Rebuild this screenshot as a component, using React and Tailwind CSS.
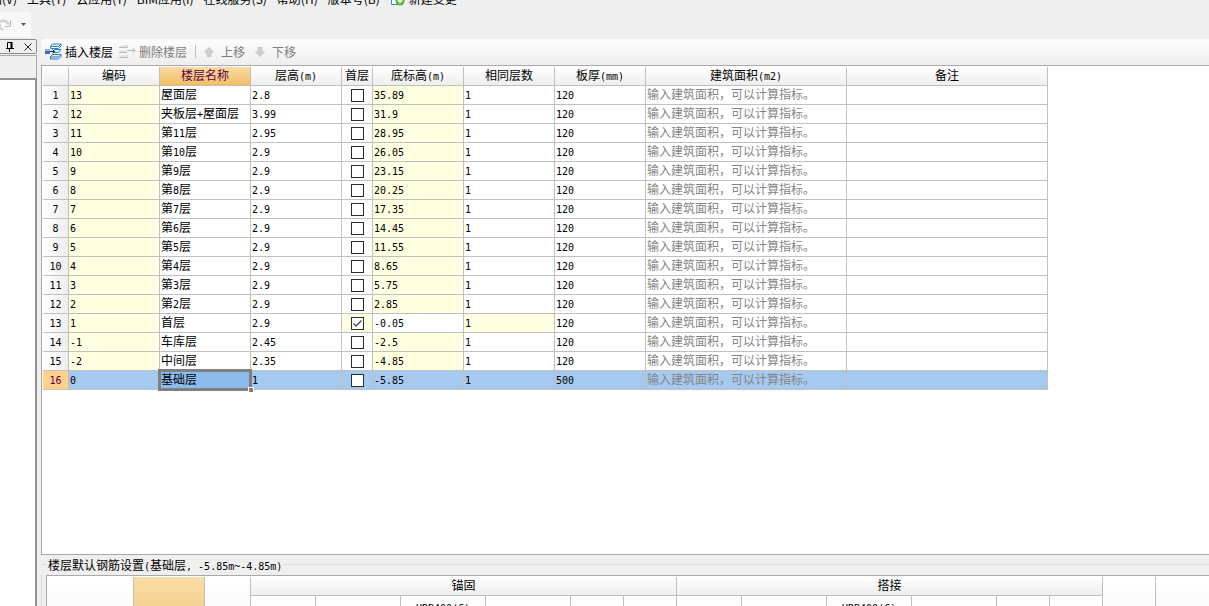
import clsx from "clsx";

const MENUS = ["视图(V)", "工具(T)", "云应用(Y)", "BIM应用(I)", "在线服务(S)", "帮助(H)", "版本号(B)"];

const COLUMNS = [
  { key: "code", label: "编码", width: "w-[91px]" },
  { key: "name", label: "楼层名称", width: "w-[91px]" },
  { key: "height", label: "层高(m)", width: "w-[91px]" },
  { key: "first", label: "首层", width: "w-[31px]" },
  { key: "bottom", label: "底标高(m)", width: "w-[91px]" },
  { key: "same", label: "相同层数", width: "w-[91px]" },
  { key: "slab", label: "板厚(mm)", width: "w-[91px]" },
  { key: "area", label: "建筑面积(m2)", width: "w-[201px]" },
  { key: "remark", label: "备注", width: "w-[201px]" },
];

const FLOORS = [
  { code: "13", name: "屋面层", height: "2.8", bottom: "35.89", slab: "120" },
  { code: "12", name: "夹板层+屋面层", height: "3.99", bottom: "31.9", slab: "120" },
  { code: "11", name: "第11层", height: "2.95", bottom: "28.95", slab: "120" },
  { code: "10", name: "第10层", height: "2.9", bottom: "26.05", slab: "120" },
  { code: "9", name: "第9层", height: "2.9", bottom: "23.15", slab: "120" },
  { code: "8", name: "第8层", height: "2.9", bottom: "20.25", slab: "120" },
  { code: "7", name: "第7层", height: "2.9", bottom: "17.35", slab: "120" },
  { code: "6", name: "第6层", height: "2.9", bottom: "14.45", slab: "120" },
  { code: "5", name: "第5层", height: "2.9", bottom: "11.55", slab: "120" },
  { code: "4", name: "第4层", height: "2.9", bottom: "8.65", slab: "120" },
  { code: "3", name: "第3层", height: "2.9", bottom: "5.75", slab: "120" },
  { code: "2", name: "第2层", height: "2.9", bottom: "2.85", slab: "120" },
  { code: "1", name: "首层", height: "2.9", bottom: "-0.05", slab: "120", first: true },
  { code: "-1", name: "车库层", height: "2.45", bottom: "-2.5", slab: "120" },
  { code: "-2", name: "中间层", height: "2.35", bottom: "-4.85", slab: "120" },
  { code: "0", name: "基础层", height: "1", bottom: "-5.85", slab: "500", selected: true },
];

const REBAR_GROUPS = ["锚固", "搭接"];
const REBAR_COLUMNS = [
  { width: "w-[65px]" },
  { width: "w-[85px]" },
  { width: "w-[85px]", label: "HRB400(C)" },
  { width: "w-[85px]" },
  { width: "w-[53px]" },
  { width: "w-[53px]" },
];

// Latin runs use a half-width mono face, Chinese keeps the 12px face
function Mixed({ text }) {
  return text
    .split(/([\x20-\x7e]+)/)
    .filter(Boolean)
    .map((part, i) =>
      /^[\x20-\x7e]/.test(part) ? (
        <span key={i} className="whitespace-pre font-['DejaVu_Sans_Mono',monospace] text-[10px] leading-none">
          {part}
        </span>
      ) : (
        <span key={i}>{part}</span>
      )
    );
}

function InsertIcon() {
  return (
    <svg width="17" height="17" viewBox="0 0 17 17" fill="none" aria-hidden="true">
      <path d="M7.500 1h8.500l-2.500 2.500H5.500z" fill="#d9eefb" stroke="#2d7fc1" />
      <path d="M5.500 3.500v2h8L16 3V1" stroke="#2d7fc1" />
      <path d="M9 6.500h7l-2.500 3H8M13.500 9.500" fill="#d9eefb" stroke="#2d7fc1" />
      <path d="M7.500 11.500H16L13.500 14H5.500z" fill="#d9eefb" stroke="#2d7fc1" />
      <path d="M5.500 14v2h8l2.500-2.500v-2" stroke="#2d7fc1" />
      <rect x="0" y="6" width="5" height="5" fill="#3f6fbf" />
      <rect x="0" y="6" width="5" height="2" fill="#8fb0e0" />
      <path d="M5 8.500h4.500M7.500 6.500l2 2-2 2" stroke="#222" />
    </svg>
  );
}

function DeleteIcon() {
  return (
    <svg width="17" height="17" viewBox="0 0 17 17" fill="none" aria-hidden="true">
      <path d="M2 2h7v2H1zM1 7h6v2H1zM2 12h7v2H1z" fill="#e6e6e6" />
      <path d="M0 4.500h9M0 9.500h8M0 14.500h9" stroke="#b8b8b8" />
      <path d="M8.500 2v3M8.500 12v3" stroke="#cecece" />
      <path d="M8 7.500h8M13.500 5l2.500 2.500-2.500 2.500" stroke="#b4b4b4" />
    </svg>
  );
}

function ArrowIcon({ down }) {
  return (
    <svg width="10" height="10" viewBox="0 0 10 10" className={clsx(down && "rotate-180")} aria-hidden="true">
      <path d="M5 .5 9.500 5H7v4.500H3V5H.5z" fill="#cfcfcf" stroke="#b9b9b9" strokeWidth=".7" />
    </svg>
  );
}

function ToolButton({ icon, label, enabled }) {
  return (
    <button type="button" className={clsx("flex items-center gap-[3px]", enabled ? "text-black" : "text-[#7d7d7d]")}>
      {icon}
      {label}
    </button>
  );
}

function cellBackground(key, floor) {
  if (floor.selected) return key === "name" ? "bg-[#8cbceb]" : "bg-[#a6c9ef]";
  if (key === "code") return "bg-[#ffffe1]";
  if (key === "bottom" && !floor.first) return "bg-[#ffffe1]";
  if ((key === "first" || key === "same") && floor.first) return "bg-[#ffffe1]";
  return "bg-white";
}

function FirstFloorBox({ floor }) {
  return (
    <span className="relative mx-auto block size-[13px]">
      <input
        type="checkbox"
        defaultChecked={floor.first}
        aria-label={`${floor.name} 首层`}
        className="peer block size-[13px] appearance-none border border-[#2b2b2b] bg-white"
      />
      <svg
        viewBox="0 0 13 13"
        fill="none"
        className="pointer-events-none absolute inset-0 hidden size-[13px] peer-checked:block"
        aria-hidden="true"
      >
        <path d="M2.500 6.500 5 9l5.500-5.500" stroke="#444" strokeWidth="1.300" />
      </svg>
    </span>
  );
}

function CellContent({ column, floor }) {
  if (column.key === "first") return <FirstFloorBox floor={floor} />;
  if (column.key === "area") return <span className="text-[#858585]">输入建筑面积，可以计算指标。</span>;
  if (column.key === "remark") return null;
  return <Mixed text={column.key === "same" ? "1" : floor[column.key]} />;
}

function FloorTable() {
  return (
    <table className="w-[1005px] table-fixed border-separate border-spacing-0">
      <thead>
        <tr className="h-[19px]">
          <th className="w-[26px] border-r border-b border-[#c0c0c0] bg-linear-to-b from-white to-[#eeeeee] p-0" />
          {COLUMNS.map((column) => (
            <th
              key={column.key}
              className={clsx(
                "border-r border-b border-[#c0c0c0] bg-linear-to-b px-0 pt-0 pb-[2px] text-center font-normal leading-[16px]",
                column.width,
                column.key === "name" ? "from-[#f8dba4] to-[#f2bf62] text-[#5c0049]" : "from-white to-[#eeeeee]"
              )}
            >
              <Mixed text={column.label} />
            </th>
          ))}
        </tr>
      </thead>
      <tbody>
        {FLOORS.map((floor, i) => (
          <tr key={floor.code} className="h-[19px]">
            <th
              className={clsx(
                "border-r border-b border-[#c0c0c0] px-0 pt-0 pb-[2px] text-center font-normal leading-[16px]",
                floor.selected ? "bg-[#ffd28c] text-[#5c0049]" : "bg-linear-to-r from-white to-[#eeeeee]"
              )}
            >
              <Mixed text={String(i + 1)} />
            </th>
            {COLUMNS.map((column) => (
              <td
                key={column.key}
                className={clsx(
                  "relative border-r border-b border-[#c0c0c0] pt-0 pr-0 leading-[16px] whitespace-nowrap",
                  column.key === "first" ? "pb-0 pl-0" : "pb-[2px] pl-px",
                  cellBackground(column.key, floor)
                )}
              >
                <CellContent column={column} floor={floor} />
                {floor.selected && column.key === "name" ? (
                  <span className="absolute -inset-[2px] z-10 border-[3px] border-[#808080]">
                    <span className="absolute -right-[5px] -bottom-[5px] size-[6px] border border-white bg-[#808080]" />
                  </span>
                ) : null}
              </td>
            ))}
          </tr>
        ))}
      </tbody>
    </table>
  );
}

function RebarTable() {
  const plain = "border-[#c0c0c0] bg-linear-to-b p-0";
  return (
    <table className="w-full min-w-[1162px] table-fixed border-separate border-spacing-0">
      <colgroup>
        <col className="w-[87px]" />
        <col className="w-[71px]" />
        <col className="w-[46px]" />
        {REBAR_GROUPS.map((group) =>
          REBAR_COLUMNS.map((column, i) => <col key={`${group}${i}`} className={column.width} />)
        )}
        <col className="w-[53px]" />
        <col />
      </colgroup>
      <thead>
        <tr className="h-[19px]">
          <th rowSpan={2} className={clsx(plain, "border-r from-white to-[#f4f4f4]")} />
          <th rowSpan={2} className={clsx(plain, "border-r from-[#f8dba4] to-[#f4c577]")} />
          <th rowSpan={2} className={clsx(plain, "border-r from-white to-[#f4f4f4]")} />
          {REBAR_GROUPS.map((group) => (
            <th
              key={group}
              colSpan={6}
              className="border-r border-b border-[#c0c0c0] bg-linear-to-b from-white to-[#eeeeee] px-0 pt-0 pb-[2px] font-normal leading-[16px]"
            >
              {group}
            </th>
          ))}
          <th rowSpan={2} className={clsx(plain, "border-r from-white to-[#f4f4f4]")} />
          <th rowSpan={2} className={clsx(plain, "from-white to-[#f4f4f4]")} />
        </tr>
        <tr className="h-[60px]">
          {REBAR_GROUPS.map((group) =>
            REBAR_COLUMNS.map((column, i) => (
              <th
                key={`${group}${i}`}
                className="border-r border-[#c0c0c0] bg-linear-to-b from-white to-[#f4f4f4] px-0 pt-[3px] align-top font-normal leading-[16px]"
              >
                {column.label ? <Mixed text={column.label} /> : null}
              </th>
            ))
          )}
        </tr>
      </thead>
    </table>
  );
}

export default function App() {
  return (
    <div className="flex h-screen flex-col overflow-hidden bg-[#efefef] font-['Noto_Sans_CJK_SC',sans-serif] text-[12px] text-black">
      {/* Menu bar */}
      <nav className="flex h-[7px] shrink-0 items-end justify-start gap-[10px] overflow-hidden leading-[16px] whitespace-nowrap">
        {MENUS.map((menu, i) => (
          <button key={menu} type="button" className={clsx("shrink-0", i === 0 && "-ml-[22px]")}>
            {menu}
          </button>
        ))}
        <button type="button" className="flex shrink-0 items-end gap-1">
          <svg width="15" height="16" viewBox="0 0 15 16" fill="none" aria-hidden="true">
            <path d="M1.500 1v12.500h9V1" fill="#fff" stroke="#3f86c6" />
            <circle cx="10" cy="10" r="4.500" fill="#4fb62c" />
            <path d="M10 7.500v5M7.500 10h5" stroke="#fff" strokeWidth="1.500" />
          </svg>
          新建变更
        </button>
      </nav>

      {/* Quick access bar */}
      <div className="mt-[5px] mb-[2px] flex h-[25px] w-[31px] shrink-0 items-center justify-between bg-linear-to-b from-[#f6f6f6] to-[#fbfbfb] pr-1">
        <button type="button" aria-label="恢复">
          <svg width="12" height="14" viewBox="0 0 12 14" fill="none" aria-hidden="true">
            <path d="M0 4C3 1.500 6.500 3 9 6.500" stroke="#d0d0d0" strokeWidth="2.500" />
            <path d="M10.500 2v6.500H4.500" stroke="#bdbdbd" />
            <path d="M.5 6c-1.500 3 0 5 3 6" stroke="#d0d0d0" strokeWidth="2" />
          </svg>
        </button>
        <button type="button" aria-label="更多">
          <svg width="7" height="4" viewBox="0 0 7 4" aria-hidden="true">
            <path d="M1 0h5L3.500 3z" fill="#555" />
          </svg>
        </button>
      </div>

      <div className="flex min-h-0 flex-1 gap-1">
        {/* Docked side panel */}
        <aside className="flex w-[37px] shrink-0 flex-col">
          <div className="flex h-[15px] shrink-0 items-center justify-end gap-[10px] rounded-r-xs border border-l-0 border-[#8c8c8c] pr-1">
            <button type="button" aria-label="固定">
              <svg width="8" height="10" viewBox="0 0 8 10" fill="none" aria-hidden="true">
                <path d="M1.500 6V.5h4V6M0 6.500h8M3.500 7v3" stroke="#000" />
                <path d="M5.500 0v6" stroke="#000" strokeWidth="2" />
              </svg>
            </button>
            <button type="button" aria-label="关闭">
              <svg width="8" height="8" viewBox="0 0 8 8" fill="none" aria-hidden="true">
                <path d="m.5.5 7 7m0-7-7 7" stroke="#222" />
              </svg>
            </button>
          </div>
          <div className="mt-px h-[23px] shrink-0 border-t border-r border-[#acacac]" />
          <div className="flex-1 border-t-2 border-r-2 border-[#919191] bg-white" />
        </aside>

        <main className="flex min-w-0 flex-1 flex-col">
          <div className="flex h-[26px] shrink-0 items-center rounded-tl bg-linear-to-b from-[#fdfdfd] to-[#eeeeee] pb-px pl-1 leading-[18px]">
            <ToolButton icon={<InsertIcon />} label="插入楼层" enabled />
            <div className="ml-1.5">
              <ToolButton icon={<DeleteIcon />} label="删除楼层" />
            </div>
            <div className="mx-2 h-[13px] w-px bg-[#bdbdbd]" />
            <div className="flex gap-[10px]">
              <ToolButton icon={<span className="w-[14px]"><ArrowIcon /></span>} label="上移" />
              <ToolButton icon={<span className="w-[14px]"><ArrowIcon down /></span>} label="下移" />
            </div>
          </div>
          <div className="min-h-0 flex-1 overflow-hidden border border-r-0 border-[#a9a9ad] bg-white p-px">
            <FloorTable />
          </div>

          {/* Default rebar settings of the selected floor */}
          <section className="h-[51px] shrink-0 overflow-hidden">
            <div className="flex h-[20px] items-center pb-px leading-[18px] whitespace-nowrap">
              <span className="h-px w-[6px] bg-[#dcdcdc]" />
              <h2 className="px-px">
                <Mixed text="楼层默认钢筋设置(基础层, -5.85m~-4.85m)" />
              </h2>
              <span className="h-px flex-1 bg-[#dcdcdc]" />
            </div>
            <div className="h-[31px] border-l border-[#dcdcdc] pl-1">
              <div className="h-full overflow-hidden border-t border-l border-[#a9a9a9] bg-white pt-px">
                <RebarTable />
              </div>
            </div>
          </section>
        </main>
      </div>
    </div>
  );
}
